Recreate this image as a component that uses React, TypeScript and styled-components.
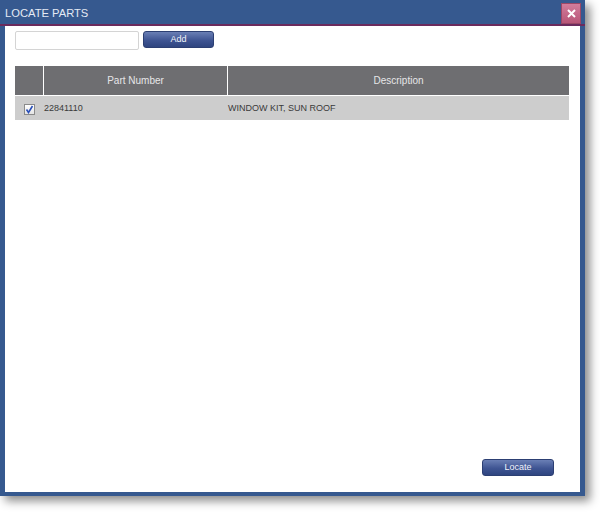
import React from "react";
import styled, { createGlobalStyle } from "styled-components";

const GlobalStyle = createGlobalStyle`
  html, body {
    margin: 0;
    padding: 0;
    background: #ffffff;
    font-family: "Liberation Sans", Arial, sans-serif;
  }
`;

const Page = styled.div`
  width: 600px;
  height: 512px;
  box-sizing: border-box;
`;

const Window = styled.div`
  width: 585px;
  height: 496px;
  background: #36598f;
  display: flex;
  flex-direction: column;
  box-shadow: 5px 5px 9px rgba(0, 0, 0, 0.45);
`;

const TitleBar = styled.div`
  height: 24px;
  display: flex;
  align-items: center;
  justify-content: space-between;
  padding: 0 4px 0 5px;
`;

const Title = styled.span`
  color: #e4eaf4;
  font-size: 11.2px;
  padding-top: 1px;
`;

const CloseButton = styled.div`
  width: 20px;
  height: 21px;
  margin-top: 2px;
  background: linear-gradient(#d27d9c, #b85678);
  border: 1px solid #9c4866;
  box-sizing: border-box;
  display: flex;
  align-items: center;
  justify-content: center;
`;

const Divider = styled.div`
  height: 2px;
  background: #6b2b5d;
`;

const Body = styled.div`
  flex: 1;
  margin: 0 5px 4px 5px;
  background: #ffffff;
  display: flex;
  flex-direction: column;
  padding: 5px 11px 16px 10px;
`;

const Toolbar = styled.div`
  display: flex;
  align-items: flex-start;
  gap: 4px;
`;

const TextInput = styled.input`
  width: 124px;
  height: 19px;
  box-sizing: border-box;
  border: 1px solid #d4d4d4;
  border-radius: 2px;
  padding: 0 3px;
  font-family: inherit;
  font-size: 9px;
`;

const Button = styled.button<{ $width: number }>`
  width: ${(p) => p.$width}px;
  height: 17px;
  border: 1px solid #2c3f73;
  border-radius: 3px;
  background: linear-gradient(#6a7fb5, #3f5593 55%, #2f4580);
  color: #f2f4fa;
  font-family: inherit;
  font-size: 9px;
  padding: 0;
  padding-bottom: 2px;
`;

const Table = styled.div`
  margin-top: 16px;
  width: 554px;
  display: flex;
  flex-direction: column;
  gap: 1px;
`;

const Row = styled.div<{ $header?: boolean }>`
  display: grid;
  grid-template-columns: 28px 183px 1fr;
  column-gap: 1px;
  height: ${(p) => (p.$header ? 29 : 24)}px;
  background: ${(p) => (p.$header ? "#ffffff" : "#cdcdcd")};
`;

const HeadCell = styled.div`
  background: #6e6e71;
  color: #e6e6e8;
  font-size: 10px;
  display: flex;
  align-items: center;
  justify-content: center;
`;

const Cell = styled.div`
  display: flex;
  align-items: center;
  font-size: 9px;
  color: #3a3a3a;
`;

const CheckCell = styled(Cell)`
  justify-content: center;
  padding-top: 2px;
`;

const CheckBox = styled.div`
  width: 11px;
  height: 11px;
  box-sizing: border-box;
  border: 1px solid #8a8a8a;
  background: linear-gradient(#ffffff, #e4e4e4);
  display: flex;
  align-items: center;
  justify-content: center;
`;

const Footer = styled.div`
  margin-top: auto;
  display: flex;
  justify-content: flex-end;
  padding-right: 15px;
`;

export default function App() {
  return (
    <Page>
      <GlobalStyle />
      <Window>
        <TitleBar>
          <Title>LOCATE PARTS</Title>
          <CloseButton>
            <svg width="11" height="11" viewBox="0 0 11 11">
              <path d="M2 2 L9 9 M9 2 L2 9" stroke="#ffffff" strokeWidth="2" />
            </svg>
          </CloseButton>
        </TitleBar>
        <Divider />
        <Body>
          <Toolbar>
            <TextInput />
            <Button $width={71}>Add</Button>
          </Toolbar>
          <Table>
            <Row $header>
              <HeadCell />
              <HeadCell>Part Number</HeadCell>
              <HeadCell>Description</HeadCell>
            </Row>
            <Row>
              <CheckCell>
                <CheckBox>
                  <svg width="9" height="9" viewBox="0 0 9 9">
                    <path d="M1.5 4.5 L3.5 7.5 L7.5 1" stroke="#2a4fb8" strokeWidth="1.6" fill="none" />
                  </svg>
                </CheckBox>
              </CheckCell>
              <Cell>22841110</Cell>
              <Cell>WINDOW KIT, SUN ROOF</Cell>
            </Row>
          </Table>
          <Footer>
            <Button $width={72}>Locate</Button>
          </Footer>
        </Body>
      </Window>
    </Page>
  );
}
